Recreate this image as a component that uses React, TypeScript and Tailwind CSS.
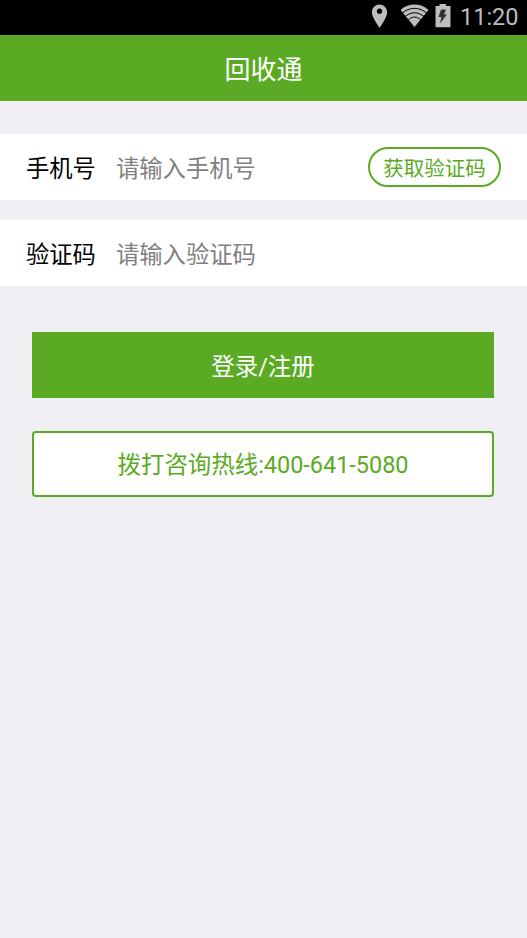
import { useState } from "react";

function StatusBar() {
  return (
    <div className="flex h-[35px] items-start justify-end bg-black pt-1 pr-[9px] text-[#bdbdbd]">
      <svg className="mr-[13px] h-[24px] w-[16px]" viewBox="0.500 0 16 24" fill="currentColor">
        <path fillRule="evenodd" d="M8 .5a7.700 7.700 0 0 0-7.700 7.700C.3 13.500 8 23.800 8 23.800S15.700 13.500 15.700 8.200A7.700 7.700 0 0 0 8 .5Zm0 4.100a2.600 2.600 0 1 1 0 5.200 2.600 2.600 0 0 1 0-5.200Z" />
      </svg>
      <svg className="mr-[6px] h-[24px] w-[28px]" viewBox="0.500 0 28 24">
        <path d="M0 6C8-1.300 20-1.300 28 6L14 23Z" fill="currentColor" />
        <g fill="none" stroke="black" strokeWidth="1">
          <path d="M1.500 9.300C9 2.700 19 2.700 26.500 9.300" />
          <path d="M4.500 12.700C10 7.500 18 7.500 23.500 12.700" />
          <path d="M7.500 16.300C11.500 12 16.500 12 20.500 16.300" />
        </g>
      </svg>
      <svg className="mr-[10px] h-[24px] w-[16px]" viewBox="0 0 16 24">
        <path d="M4.500 0h6.500v2h4.500v21.300H.5V2h4Z" fill="currentColor" />
        <path d="M6 5.500h5L9 10.500h3L5 19.500l1.300-6.500H3.500Z" fill="#333333" />
      </svg>
      <span className="-ml-px w-[58px] pt-px font-[Roboto] text-[23.500px] leading-[24px]">11:20</span>
    </div>
  );
}

export default function App() {
  const [phone, setPhone] = useState("");
  const [code, setCode] = useState("");

  return (
    <div className="flex min-h-screen flex-col bg-[#efeff4] font-[Roboto,'Noto_Sans_CJK_SC',sans-serif]">
      <StatusBar />
      <header className="flex h-[66px] items-center justify-center bg-[#5aab23] pt-[5px] text-[26px] text-white">回收通</header>

      <div className="mt-[33px] flex h-[66px] items-center bg-white px-[26px] text-[23.300px]">
        <label htmlFor="phone" className="w-[90px] shrink-0 pt-[5px] text-black">手机号</label>
        <input
          id="phone"
          value={phone}
          onChange={(e) => setPhone(e.target.value)}
          placeholder="请输入手机号"
          className="min-w-0 flex-1 pt-[5px] outline-none placeholder:text-[#808080]"
        />
        <button type="button" className="h-[40px] w-[133px] shrink-0 rounded-full border-2 border-[#5aab23] pt-[5px] text-[20.500px] leading-none text-[#5aab23]">
          获取验证码
        </button>
      </div>

      <div className="mt-5 flex h-[66px] items-center bg-white px-[26px] text-[23.300px]">
        <label htmlFor="code" className="w-[90px] shrink-0 pt-[5px] text-black">验证码</label>
        <input
          id="code"
          value={code}
          onChange={(e) => setCode(e.target.value)}
          placeholder="请输入验证码"
          className="min-w-0 flex-1 pt-[5px] outline-none placeholder:text-[#808080]"
        />
      </div>

      <div className="mt-[46px] flex flex-col gap-[33px] pr-[33px] pl-[32px] text-[23.450px]">
        <button type="button" className="h-[66px] bg-[#5aab23] pt-[5px] text-white">登录/注册</button>
        <button type="button" className="h-[66px] rounded-[4px] border-2 border-[#5aab23] bg-white pt-[4px] text-[#5aab23]">
          拨打咨询热线:400-641-5080
        </button>
      </div>
    </div>
  );
}
